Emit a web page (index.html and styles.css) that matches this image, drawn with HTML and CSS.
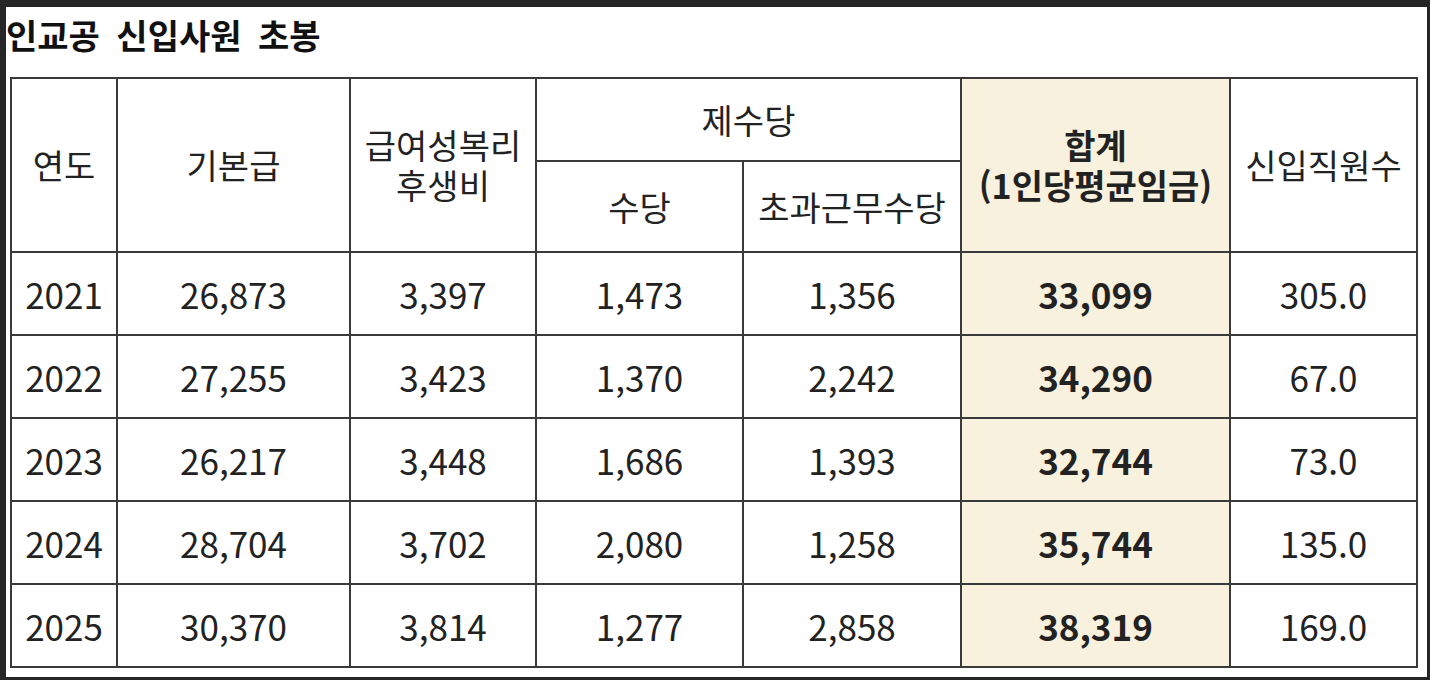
FILE: index.html
```html
<!DOCTYPE html>
<html lang="ko">
<head>
<meta charset="utf-8">
<link rel="stylesheet" href="styles.css">
</head>
<body>
<div class="sheet">
  <h1 class="title">인교공 신입사원 초봉</h1>
  <table class="pay">
    <colgroup>
      <col class="c-year"><col class="c-base"><col class="c-welfare"><col class="c-allow"><col class="c-over"><col class="c-total"><col class="c-count">
    </colgroup>
    <thead>
      <tr class="h1">
        <th rowspan="2">연도</th>
        <th rowspan="2">기본급</th>
        <th rowspan="2">급여성복리<br>후생비</th>
        <th colspan="2" class="top">제수당</th>
        <th rowspan="2" class="sum">합계<br>(1인당평균임금)</th>
        <th rowspan="2">신입직원수</th>
      </tr>
      <tr class="h2">
        <th>수당</th>
        <th>초과근무수당</th>
      </tr>
    </thead>
    <tbody>
      <tr><td>2021</td><td>26,873</td><td>3,397</td><td>1,473</td><td>1,356</td><td class="sum">33,099</td><td>305.0</td></tr>
      <tr><td>2022</td><td>27,255</td><td>3,423</td><td>1,370</td><td>2,242</td><td class="sum">34,290</td><td>67.0</td></tr>
      <tr><td>2023</td><td>26,217</td><td>3,448</td><td>1,686</td><td>1,393</td><td class="sum">32,744</td><td>73.0</td></tr>
      <tr><td>2024</td><td>28,704</td><td>3,702</td><td>2,080</td><td>1,258</td><td class="sum">35,744</td><td>135.0</td></tr>
      <tr><td>2025</td><td>30,370</td><td>3,814</td><td>1,277</td><td>2,858</td><td class="sum">38,319</td><td>169.0</td></tr>
    </tbody>
  </table>
</div>
</body>
</html>
```

FILE: styles.css
```css
html, body {
  margin: 0;
  padding: 0;
  background: #262626;
}
body {
  padding: 7px 3px 3px 6px;
  font-family: "Noto Sans CJK KR", "Noto Sans", sans-serif;
  color: #222;
}
.sheet {
  background: #fff;
  width: 1421px;
  height: 670px;
  box-sizing: border-box;
  padding: 0 0 0 4px;
  overflow: hidden;
}
.title {
  margin: 0 0 0 -4px;
  padding: 10px 0 0 0;
  height: 56px;
  box-sizing: border-box;
  font-size: 34px;
  line-height: 36px;
  font-weight: bold;
  color: #111;
  word-spacing: 7px;
}
.pay {
  border-collapse: collapse;
  table-layout: fixed;
  width: 1408px;
  margin-top: 14px;
}
.c-year { width: 106px; }
.c-base { width: 233px; }
.c-welfare { width: 186px; }
.c-allow { width: 207px; }
.c-over { width: 218px; }
.c-total { width: 269px; }
.c-count { width: 187px; }
.pay th, .pay td {
  border: 2px solid #3a3a3a;
  padding: 0;
  text-align: center;
  font-size: 35px;
  font-weight: normal;
  line-height: 40px;
  color: #222;
}
.pay th { font-size: 34px; }
.h1 { height: 83px; }
.h2 { height: 91px; }
.pay tbody tr { height: 83px; }
.pay .sum {
  background: #f8f1de;
  font-weight: bold;
}
```
